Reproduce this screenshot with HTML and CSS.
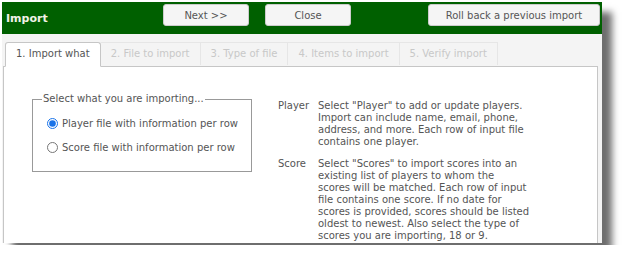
FILE: index.html
```html
<!DOCTYPE html>
<html lang="en">

<head>
    <meta charset="UTF-8">
    <meta name="viewport" content="width=device-width, initial-scale=1.0">
    <title>Import</title>
    <link rel="stylesheet" href="styles.css">
</head>

<body>
    <div class="dialog">
        <div class="dialog-header">
            <span class="dialog-title">Import</span>
            <button class="btn btn-next">Next &gt;&gt;</button>
            <button class="btn btn-close">Close</button>
            <button class="btn btn-rollback">Roll back a previous import</button>
        </div>

        <div class="dialog-body">
            <ul class="tabs">
                <li class="tab active">1. Import what</li>
                <li class="tab">2. File to import</li>
                <li class="tab">3. Type of file</li>
                <li class="tab">4. Items to import</li>
                <li class="tab">5. Verify import</li>
            </ul>

            <div class="panel">
                <fieldset class="choice">
                    <legend>Select what you are importing...</legend>
                    <label class="option">
                        <input type="radio" name="kind" checked> Player file with information per row
                    </label>
                    <label class="option">
                        <input type="radio" name="kind"> Score file with information per row
                    </label>
                </fieldset>

                <dl class="help">
                    <dt>Player</dt>
                    <dd>Select "Player" to add or update players.<br>
                        Import can include name, email, phone,<br>
                        address, and more. Each row of input file<br>
                        contains one player.</dd>
                    <dt>Score</dt>
                    <dd>Select "Scores" to import scores into an<br>
                        existing list of players to whom the<br>
                        scores will be matched. Each row of input<br>
                        file contains one score. If no date for<br>
                        scores is provided, scores should be listed<br>
                        oldest to newest. Also select the type of<br>
                        scores you are importing, 18 or 9.</dd>
                </dl>
            </div>
        </div>
    </div>
</body>

</html>
```

FILE: styles.css
```css
body {
    margin: 0;
    background: #fff;
    font-family: "DejaVu Sans", Verdana, sans-serif;
    font-size: 10px;
    color: #555;
}

.dialog {
    margin: 2px;
    width: 600px;
    height: 241px;
    background: #f4f4f4;
    box-shadow: 10px 10px 7px #6e6e6e;
    display: flex;
    flex-direction: column;
    overflow: hidden;
}

.dialog-header {
    height: 32px;
    background: #006000;
    display: flex;
    align-items: center;
    flex-shrink: 0;
}

.dialog-title {
    font-weight: bold;
    color: #f2f2e6;
    font-size: 11px;
    padding-left: 4px;
    width: 157px;
}

.btn {
    height: 22px;
    margin-top: -6px;
    background: #f5f5f5;
    border: 1px solid #ccc;
    border-radius: 3px;
    font-family: inherit;
    font-size: 10px;
    color: #555;
    padding: 0;
}

.btn-next {
    width: 86px;
}

.btn-close {
    width: 86px;
    margin-left: 16px;
}

.btn-rollback {
    width: 172px;
    margin-left: auto;
    margin-right: 2px;
}

.dialog-body {
    flex: 1;
    display: flex;
    flex-direction: column;
    padding: 8px 4px 0 1px;
}

.tabs {
    list-style: none;
    margin: 0 0 -1px 2px;
    padding: 0;
    display: flex;
    position: relative;
    z-index: 1;
}

.tab {
    height: 22px;
    line-height: 22px;
    padding: 0 10px;
    border: 1px solid #e6e6e6;
    border-bottom: none;
    border-left: none;
    color: #c8c8c8;
    background: #f4f4f4;
}

.tab.active {
    background: #fff;
    color: #555;
    border: 1px solid #c6c6c6;
    border-bottom: 1px solid #fff;
    border-radius: 3px 3px 0 0;
    height: 23px;
    padding: 0 10px;
}

.panel {
    flex: 1;
    background: #fff;
    border: 1px solid #c6c6c6;
    border-bottom: none;
    display: flex;
    align-items: flex-start;
    padding: 26px 0 0 28px;
}

.choice {
    width: 198px;
    min-width: 0;
    margin: 0;
    padding: 11px 6px 17px 14px;
    border: 1px solid #999;
    border-radius: 0;
}

.choice legend {
    padding: 0 1px;
    margin-left: -5px;
    line-height: 12px;
}

.option {
    display: flex;
    align-items: center;
    gap: 4px;
    height: 14px;
    white-space: nowrap;
}

.option + .option {
    margin-top: 10px;
}

.option input {
    margin: 0;
    width: 11px;
    height: 11px;
    accent-color: #1a73e8;
}

.help {
    margin: 7px 0 0 26px;
    display: grid;
    grid-template-columns: 40px auto;
    row-gap: 10px;
    line-height: 12px;
    white-space: nowrap;
}

.help dt {
    margin: 0;
}

.help dd {
    margin: 0;
}
```
